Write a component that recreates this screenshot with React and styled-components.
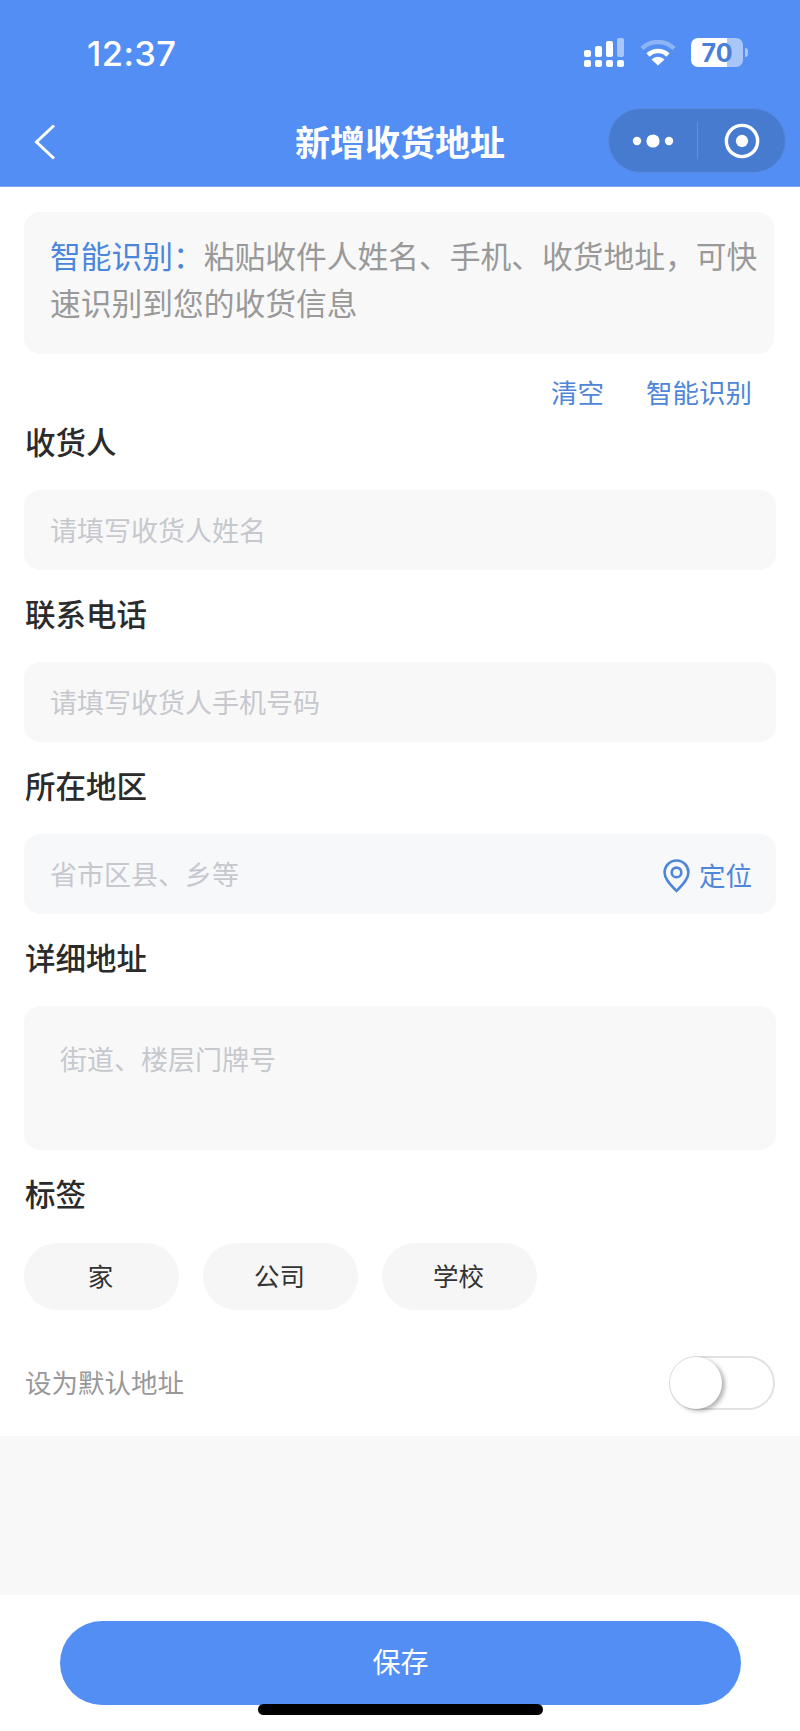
import React from "react";
import styled, { createGlobalStyle } from "styled-components";

const GlobalStyle = createGlobalStyle`
  * { box-sizing: border-box; }
  html, body { margin: 0; padding: 0; background: #fff; }
  body { font-family: "Noto Sans CJK SC", "Noto Sans", sans-serif; }
`;

const Page = styled.div`
  position: relative;
  width: 800px;
  height: 1731px;
  display: flex;
  flex-direction: column;
  overflow: hidden;
  background: #fff;
`;

const Header = styled.header`
  height: 187px;
  flex: none;
  background: #528ef4;
  border-bottom: 1px solid #7ea6e6;
`;

const StatusBar = styled.div`
  height: 106px;
  padding: 38px 52px 0 87px;
  display: flex;
  justify-content: space-between;
  align-items: flex-start;
  color: #fff;
`;

const Time = styled.span`
  font-family: "Inter", "Liberation Sans", sans-serif;
  font-size: 34.5px;
  line-height: 32px;
  font-weight: 500;
  letter-spacing: 0.4px;
`;

const StatusIcons = styled.div`
  display: flex;
  align-items: center;
  gap: 15px;
`;

const BatteryWrap = styled.div`
  display: flex;
  align-items: center;
  gap: 2px;
`;

const Battery = styled.div`
  width: 52px;
  height: 29px;
  border-radius: 7px;
  display: flex;
  align-items: center;
  justify-content: center;
  background: linear-gradient(90deg, #fff 0 70%, #a9c6f8 70% 100%);
  color: #4a7fd8;
  font-family: "Inter", "Liberation Sans", sans-serif;
  font-size: 25px;
  font-weight: 700;
`;

const BatteryTip = styled.div`
  width: 3px;
  height: 9px;
  border-radius: 0 3px 3px 0;
  background: #a9c6f8;
`;

const NavBar = styled.div`
  position: relative;
  height: 80px;
  display: flex;
  align-items: center;
  justify-content: center;
`;

const BackButton = styled.button`
  position: absolute;
  left: 33px;
  top: 17px;
  padding: 0;
  border: 0;
  background: none;
  display: flex;
`;

const Title = styled.h1`
  margin: 0;
  padding-bottom: 11px;
  color: #fff;
  font-size: 35px;
  line-height: 60px;
  font-weight: 700;
`;

const Capsule = styled.div`
  position: absolute;
  left: 608px;
  top: 2px;
  width: 178px;
  height: 65px;
  border-radius: 33px;
  display: flex;
  align-items: center;
  background: #477bd0;
  border: 1px solid #5a8be0;
`;

const CapsuleSide = styled.div`
  flex: 1;
  display: flex;
  align-items: center;
  justify-content: center;

  svg {
    margin-left: ${(p) => p.$shift || 0}px;
  }
`;

const CapsuleDivider = styled.div`
  width: 1px;
  height: 37px;
  background: #5f8fe0;
`;

const Form = styled.main`
  flex: none;
  padding: 25px 24px 26px 24px;
`;

const SmartBox = styled.div`
  height: 142px;
  margin-right: 2px;
  padding: 19px 10px 0 26px;
  border-radius: 16px;
  background: #f8f8f8;
  color: #999;
  font-size: 30.75px;
  line-height: 47px;
`;

const SmartLabel = styled.span`
  color: #4a86dc;
`;

const SmartActions = styled.div`
  height: 40px;
  margin-top: 20px;
  padding-right: 24px;
  display: flex;
  justify-content: flex-end;
  gap: 42px;
`;

const ActionLink = styled.a`
  color: #4f86d8;
  font-size: 26.5px;
  line-height: 36px;
`;

const Field = styled.section`
  margin-top: ${(p) => p.$top || 25}px;
`;

const Label = styled.div`
  height: 40px;
  margin-bottom: 27px;
  color: #2b2b2b;
  font-size: 30.5px;
  line-height: 36px;
  font-weight: 500;
  padding-left: 1px;
`;

const InputBox = styled.div`
  height: 80px;
  padding: 0 24px 0 26px;
  border-radius: 16px;
  display: flex;
  align-items: center;
  justify-content: space-between;
  background: ${(p) => p.$bg || "#f8f8f8"};
`;

const Placeholder = styled.span`
  padding-bottom: 2px;
  color: #c6c8ce;
  font-size: 27px;
`;

const TextArea = styled.div`
  height: 144px;
  padding: 31px 36px 0;
  border-radius: 16px;
  background: #f8f8f8;
  color: #c6c8ce;
  font-size: 27px;
  line-height: 44px;
`;

const Locate = styled.div`
  display: flex;
  align-items: center;
  gap: 9px;
  color: #4f86d8;
  font-size: 26.5px;

  svg {
    margin-top: 4px;
  }
`;

const TagRow = styled.div`
  display: flex;
  gap: 24px;
  margin-top: 28px;
`;

const Tag = styled.div`
  width: 155px;
  height: 67px;
  padding: 0 2px 4px 0;
  border-radius: 34px;
  display: flex;
  align-items: center;
  justify-content: center;
  background: #f6f6f6;
  color: #333;
  font-size: 25.5px;
`;

const DefaultRow = styled.div`
  margin-top: 46px;
  height: 54px;
  display: flex;
  align-items: center;
  justify-content: space-between;
`;

const DefaultText = styled.span`
  padding: 0 0 4px 1px;
  color: #999;
  font-size: 26.5px;
`;

const Toggle = styled.div`
  position: relative;
  width: 106px;
  height: 54px;
  margin-right: 1px;
  border-radius: 27px;
  background: #fff;
  border: 2px solid #e2e2e2;
`;

const Knob = styled.div`
  position: absolute;
  left: -1px;
  top: -1px;
  width: 52px;
  height: 52px;
  border-radius: 50%;
  background: #fff;
  box-shadow: 3px 2px 4px rgba(0, 0, 0, 0.3);
`;

const Spacer = styled.div`
  height: 159px;
  flex: none;
  background: #f8f8f8;
`;

const Footer = styled.footer`
  flex: 1;
  padding: 26px 59px 0 60px;
`;

const SaveButton = styled.button`
  width: 100%;
  height: 84px;
  padding: 0 0 4px;
  border: 0;
  border-radius: 42px;
  background: #528ef4;
  color: #fff;
  font-family: inherit;
  font-size: 28px;
`;

const HomeBar = styled.div`
  position: absolute;
  left: 258px;
  top: 1704px;
  width: 285px;
  height: 11px;
  border-radius: 6px;
  background: #000;
`;

const SignalIcon = () => (
  <svg width="41" height="29" viewBox="0 0 41 29" fill="#fff">
    <rect x="0" y="12" width="7" height="7" rx="2" />
    <rect x="11" y="8" width="7" height="11" rx="2" />
    <rect x="22" y="3" width="7" height="16" rx="2" />
    <rect x="33" y="0" width="7" height="19" rx="2" fill="#a9c6f8" />
    <rect x="0" y="22" width="7" height="7" rx="2" />
    <rect x="11" y="22" width="7" height="7" rx="2" />
    <rect x="22" y="22" width="7" height="7" rx="2" />
    <rect x="33" y="22" width="7" height="7" rx="2" />
  </svg>
);

const WifiIcon = () => (
  <svg width="36" height="26" viewBox="0 0 36 26" fill="none">
    <path d="M2 8.5 A23 23 0 0 1 34 8.5" stroke="#8fb4f6" strokeWidth="4.5" />
    <path d="M8 15 A14.5 14.5 0 0 1 28 15" stroke="#fff" strokeWidth="4.5" />
    <path d="M18 25.5 L11.5 19.5 A9 9 0 0 1 24.5 19.5 Z" fill="#fff" />
  </svg>
);

const BackIcon = () => (
  <svg width="24" height="38" viewBox="0 0 24 38" fill="none">
    <path d="M21 2.5 L3.5 19 L21 35.5" stroke="#fff" strokeWidth="3" />
  </svg>
);

const DotsIcon = () => (
  <svg width="42" height="16" viewBox="0 0 42 16" fill="#fff">
    <circle cx="5" cy="8" r="4.2" />
    <circle cx="21" cy="8" r="6.6" />
    <circle cx="37" cy="8" r="4.2" />
  </svg>
);

const TargetIcon = () => (
  <svg width="36" height="36" viewBox="0 0 38 38" fill="none">
    <circle cx="19" cy="19" r="16.5" stroke="#fff" strokeWidth="3.6" />
    <circle cx="19" cy="19" r="6.5" fill="#fff" />
  </svg>
);

const PinIcon = () => (
  <svg width="27" height="34" viewBox="0 0 27 34" fill="none" stroke="#4f86d8" strokeWidth="2.6">
    <path d="M13.5 32 C9 27 1.6 21 1.6 13.4 A11.9 11.9 0 0 1 25.4 13.4 C25.4 21 18 27 13.5 32 Z" strokeLinejoin="round" />
    <circle cx="13.5" cy="13.4" r="4.8" />
  </svg>
);

export default function App() {
  return (
    <Page>
      <GlobalStyle />
      <Header>
        <StatusBar>
          <Time>12:37</Time>
          <StatusIcons>
            <SignalIcon />
            <WifiIcon />
            <BatteryWrap>
              <Battery>70</Battery>
              <BatteryTip />
            </BatteryWrap>
          </StatusIcons>
        </StatusBar>
        <NavBar>
          <BackButton>
            <BackIcon />
          </BackButton>
          <Title>新增收货地址</Title>
          <Capsule>
            <CapsuleSide>
              <DotsIcon />
            </CapsuleSide>
            <CapsuleDivider />
            <CapsuleSide $shift={2}>
              <TargetIcon />
            </CapsuleSide>
          </Capsule>
        </NavBar>
      </Header>
      <Form>
        <SmartBox>
          <SmartLabel>智能识别：</SmartLabel>粘贴收件人姓名、手机、收货地址，可快速识别到您的收货信息
        </SmartBox>
        <SmartActions>
          <ActionLink>清空</ActionLink>
          <ActionLink>智能识别</ActionLink>
        </SmartActions>
        <Field $top={9}>
          <Label>收货人</Label>
          <InputBox>
            <Placeholder>请填写收货人姓名</Placeholder>
          </InputBox>
        </Field>
        <Field>
          <Label>联系电话</Label>
          <InputBox>
            <Placeholder>请填写收货人手机号码</Placeholder>
          </InputBox>
        </Field>
        <Field>
          <Label>所在地区</Label>
          <InputBox $bg="#f7f8fa">
            <Placeholder>省市区县、乡等</Placeholder>
            <Locate>
              <PinIcon />
              定位
            </Locate>
          </InputBox>
        </Field>
        <Field>
          <Label>详细地址</Label>
          <TextArea>街道、楼层门牌号</TextArea>
        </Field>
        <Field>
          <Label>标签</Label>
          <TagRow>
            <Tag>家</Tag>
            <Tag>公司</Tag>
            <Tag>学校</Tag>
          </TagRow>
        </Field>
        <DefaultRow>
          <DefaultText>设为默认地址</DefaultText>
          <Toggle>
            <Knob />
          </Toggle>
        </DefaultRow>
      </Form>
      <Spacer />
      <Footer>
        <SaveButton>保存</SaveButton>
      </Footer>
      <HomeBar />
    </Page>
  );
}
